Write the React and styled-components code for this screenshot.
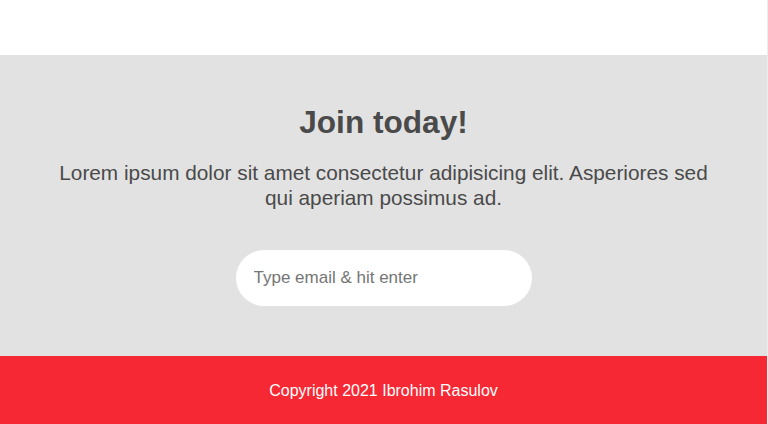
import React from 'react'
import styled, {createGlobalStyle} from 'styled-components'

const GlobalStyle=createGlobalStyle`
*{
    box-sizing:border-box;
}
body{
    margin:0;
    background:white;
    font-family:"Liberation Sans",Arial,sans-serif;
}
`

const Page=styled.div`
width:768px;
border-right:1px solid #ececec;
`
const TopSpace=styled.div`
height:55px;
background:white;
`
const Join=styled.section`
background:#e2e2e2;
color:#4a4a4a;
text-align:center;
padding:49px 50px 50px;
display:flex;
flex-direction:column;
align-items:center;
h2{
    margin:0;
    font-size:31.6px;
    line-height:37px;
    font-weight:bold;
}
p{
    margin:19px 0 0;
    font-size:20.8px;
    line-height:25px;
}
`
const EmailInput=styled.input`
margin-top:40px;
width:296px;
height:56px;
border:none;
border-radius:28px;
background:white;
padding:0 18px;
font-family:inherit;
font-size:17px;
color:#333;
outline:none;
&::placeholder{
    color:#757575;
}
`
const Footer=styled.footer`
height:68px;
padding-top:2px;
background:#f62834;
color:white;
display:flex;
align-items:center;
justify-content:center;
font-size:16px;
`

const App=()=>{
    return(
        <>
        <GlobalStyle/>
        <Page>
            <TopSpace/>
            <Join>
                <h2>Join today!</h2>
                <p>Lorem ipsum dolor sit amet consectetur adipisicing elit. Asperiores sed qui aperiam possimus ad.</p>
                <EmailInput type="email" placeholder="Type email & hit enter"/>
            </Join>
            <Footer>Copyright 2021 Ibrohim Rasulov</Footer>
        </Page>
        </>
    )
}

export default App;
